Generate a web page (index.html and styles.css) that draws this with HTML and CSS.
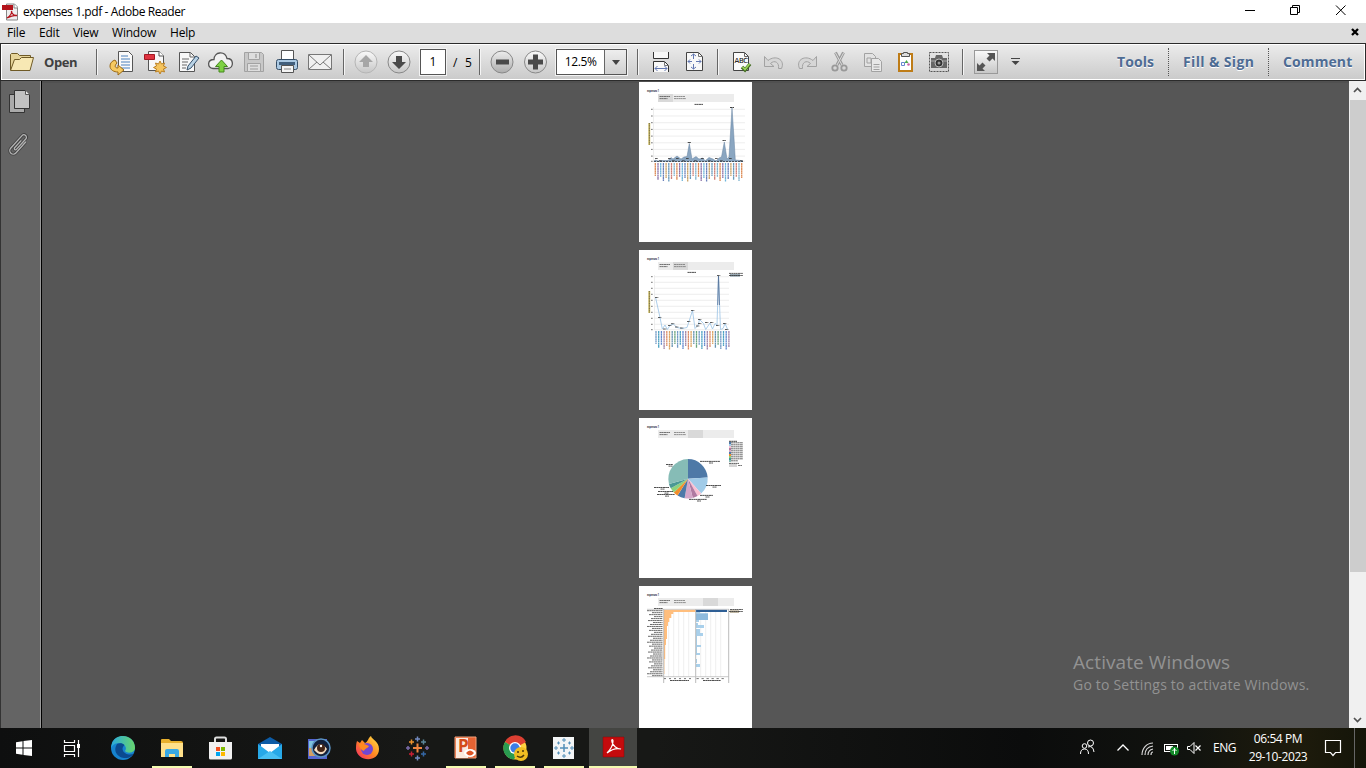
FILE: index.html
```html
<!DOCTYPE html>
<html lang="en">
<head>
<meta charset="utf-8">
<title>expenses 1.pdf - Adobe Reader</title>
<link rel="stylesheet" href="styles.css">
</head>
<body>
<header class="titlebar">
  <svg class="app-icon" width="18" height="18" viewBox="0 0 18 18"><path d="M4.500 1h8l3 3v13h-11z" fill="#eee" stroke="#888"/><path d="M12 1v4h4" fill="#fff" stroke="#888"/><path d="M0 2h11v5H0z" fill="#b3131b"/><path d="M5 15c3-2 5-5 4.500-7 0 3 3 5 5.500 4.500-3-.5-6 .5-10 2.500z" fill="none" stroke="#b3131b" stroke-width="1.300"/></svg>
  <span class="window-title">expenses 1.pdf - Adobe Reader</span>
  <svg class="window-buttons" width="138" height="23" viewBox="0 0 138 23" fill="none" stroke="#000"><path d="M17 10.500h10M62.500 7.500h7v7h-7zM64.500 7.500v-2h7v7h-2M108 5.500l9.500 9.500M117.500 5.500l-9.500 9.500"/></svg>
</header>
<nav class="menubar">
  <span class="m-file">File</span><span class="m-edit">Edit</span><span class="m-view">View</span><span class="m-window">Window</span><span class="m-help">Help</span>
  <svg class="doc-close" width="8" height="8" viewBox="0 0 8 8"><path d="M1 1l6 6M7 1l-6 6" stroke="#000" stroke-width="2.300"/></svg>
</nav>
<div class="toolbar">
  <svg class="folder" width="26" height="36" viewBox="0 0 26 36"><path d="M1.500 26V10.500l1-1h6l2 2h11v4" fill="#e6d49a" stroke="#6f5a26"/><path d="M1.500 26.500l4-11h5l2-2h12l-3.500 13z" fill="#f7e8b4" stroke="#6f5a26"/></svg>
  <span class="open-label">Open</span>
  <i class="sep s1"></i>
  <div class="tools g1">
    <svg viewBox="0 0 33 36"><path d="M13.500 7.500h10l4 4v16h-14z" fill="#fafafa" stroke="#555"/><path d="M16 12h7M16 15h9M16 18h9M16 21h9M16 24h9" stroke="#4a80bd"/><path d="M10 16c-3 1-5 3-5 6 0 4 4 6 8 6v3l6-5-6-5v3c-3 0-4-2-1-5z" fill="#f6c960" stroke="#9b6a16"/></svg>
    <svg viewBox="0 0 33 36"><path d="M10.500 7.500h11l4 4v15h-15z" fill="#f8f8f8" stroke="#555"/><path d="M21 7v5h5" fill="#fff" stroke="#555"/><path d="M6.500 10.500h10v5h-10z" fill="#df3340" stroke="#a31722"/><path d="M22 17l1.500 3 3-1-1 3 3 1.500-3 1.500 1 3-3-1-1.500 3-1.500-3-3 1 1-3-3-1.500 3-1.500-1-3 3 1z" fill="#f5c45e" stroke="#bb8023"/></svg>
    <svg viewBox="0 0 33 36"><path d="M8.500 8.500h11l4 4v15h-15z" fill="#f8f8f8" stroke="#555"/><path d="M19 9v4h4M11 15h7M11 18h6M11 21h5M11 24h4" fill="none" stroke="#666"/><path d="M25 12l3 2-8 10-4 2 1-4z" fill="#b9d3e6" stroke="#36506a"/></svg>
    <svg viewBox="0 0 33 36"><path d="M10 24.500H9c-6-1-6-9 1-9 0-8 11-9 13-1 7 0 7 9 1 10z" fill="#f2f2f2" stroke="#555" stroke-width="1.300"/><path d="M17.500 16l6 6.500h-3.500V28h-5v-5.500h-3.500z" fill="#7ed143" stroke="#44881e"/></svg>
    <svg viewBox="0 0 33 36"><path d="M7.500 8.500h17l2 2v17h-19z" fill="#c8c8c8" stroke="#a2a2a2"/><path d="M11.500 8.500h11v7h-11zM10.500 19.500h13v8h-13z" fill="#dedede" stroke="#a2a2a2"/><path d="M19 10v4M13 22h8M13 25h8" stroke="#999" stroke-width="1.200"/></svg>
    <svg viewBox="0 0 33 36"><path d="M11.500 6.500h12v10h-12z" fill="#fff" stroke="#555"/><rect x="6.500" y="15.500" width="21" height="10" rx="2" fill="#abc9e3" stroke="#344d66"/><path d="M9 18h16v3H9z" fill="#415f7d"/><path d="M11.500 21.500h12v7h-12z" fill="#f4f4f4" stroke="#555"/><path d="M14 25h7" stroke="#888"/></svg>
    <svg viewBox="0 0 33 36"><path d="M5.500 10.500h23v15h-23z" fill="#f0f0f0" stroke="#777"/><path d="M6 11l11 10 11-10M6 25l8-7M28 25l-8-7" fill="none" stroke="#777"/></svg>
  </div>
  <i class="sep s2"></i>
  <div class="tools g2">
    <svg viewBox="0 0 33 36"><circle cx="17" cy="18" r="11" fill="url(#round)" stroke="#b5b5b5"/><path d="M17 11l7 7h-4v5h-6v-5h-4z" fill="#a6a6a6"/></svg>
    <svg viewBox="0 0 33 36"><circle cx="17" cy="18" r="11" fill="url(#round)" stroke="#888"/><path d="M17 25l7-7h-4v-6h-6v6h-4z" fill="#4a4a4a"/></svg>
  </div>
  <span class="page-input">1</span><span class="slash">/</span><span class="page-count">5</span>
  <i class="sep s3"></i>
  <div class="tools g3">
    <svg viewBox="0 0 33 36"><circle cx="17" cy="18" r="11" fill="url(#roundDark)" stroke="#888"/><path d="M11 15.500h13v5H11z" fill="#4a4a4a"/></svg>
    <svg viewBox="0 0 33 36"><circle cx="17.500" cy="18" r="11" fill="url(#round)" stroke="#888"/><path d="M15 10.500h5v5h5v5h-5v5h-5v-5h-5v-5h5z" fill="#4a4a4a"/></svg>
  </div>
  <div class="zoom-box"><span class="zoom-value">12.5%</span><span class="zoom-arrow"><svg width="8" height="5" viewBox="0 0 8 5"><path d="M0 0h8L4 5z" fill="#444"/></svg></span></div>
  <i class="sep s4"></i>
  <div class="tools g4">
    <svg viewBox="0 0 33 36"><path d="M9.500 8v6.500h15V8" fill="#f8f8f8" stroke="#333"/><path d="M9.500 28V17.500h11l4 4V28" fill="#f8f8f8" stroke="#333"/><path d="M20.500 17.500v4h4" fill="none" stroke="#777"/><path d="M11 24.500h12M13.500 22l-2.500 2.500 2.500 2.500M20.500 22l2.500 2.500-2.500 2.500" fill="none" stroke="#6277b1"/></svg>
    <svg viewBox="0 0 33 36"><path d="M9.500 8.500h12l4 4v14h-16z" fill="#f8f8f8" stroke="#444"/><path d="M21.500 8.500v4h4" fill="none" stroke="#777"/><path d="M16.500 10v5M16.500 20v5M11 17.500h4M19 17.500h5M14 12l2.500-2 2.500 2M14 23l2.500 2 2.500-2M13 15.500l-2 2 2 2M22 15.500l2 2-2 2" fill="none" stroke="#6277b1"/></svg>
  </div>
  <i class="sep s5"></i>
  <div class="tools g5">
    <svg viewBox="0 0 33 36"><path d="M9.500 8.500h11l4 4v14h-15z" fill="#fafafa" stroke="#444"/><path d="M20.500 8.500v4h4" fill="none" stroke="#666"/><text x="10.500" y="19" class="abc">ABC</text><path d="M18 23l3 3 5-6" fill="none" stroke="#416b1f" stroke-width="3.500"/><path d="M18.500 23l2.500 2.500 4.500-5.500" fill="none" stroke="#9bd35c" stroke-width="1.700"/></svg>
    <svg viewBox="0 0 33 36"><path d="M7.500 12.500v10H17l-3.500-3c4-4 9-1 8 5h3c4-9-6-14-13.500-8z" fill="#d6d6d6" stroke="#a2a2a2"/></svg>
    <svg viewBox="0 0 33 36"><path d="M26.500 12.500v10H17l3.500-3c-4-4-9-1-8 5h-3c-4-9 6-14 13.500-8z" fill="#d6d6d6" stroke="#a2a2a2"/></svg>
    <svg viewBox="0 0 33 36"><path d="M12.500 8.500l6.500 12.500M20.500 8.500l-6.500 12.500" stroke="#999" stroke-width="3"/><path d="M12.500 9l6.500 12M20.500 9l-6.500 12" stroke="#dcdcdc"/><circle cx="12" cy="24" r="2.700" fill="none" stroke="#999" stroke-width="1.800"/><circle cx="21" cy="24" r="2.700" fill="none" stroke="#999" stroke-width="1.800"/></svg>
    <svg viewBox="0 0 33 36"><path d="M8.500 9.500h8l3 3v10h-11z" fill="#e2e2e2" stroke="#a2a2a2"/><path d="M15.500 14.500h7l3 3v10h-10z" fill="#e8e8e8" stroke="#a2a2a2"/><path d="M11 14h4v5h-4zM17.500 20.500h6M17.500 23h6M17.500 25.500h6" fill="none" stroke="#a2a2a2"/></svg>
    <svg viewBox="0 0 33 36"><rect x="10" y="10" width="13" height="17" fill="#fff" stroke="#be7c17" stroke-width="2"/><path d="M12.500 12.500v-3h2v-1h4v1h2v3z" fill="#ddd" stroke="#555"/><path d="M12.500 18.500h3v3h-3z" fill="none" stroke="#6685cf"/><path d="M17.500 16l2 3h-4z" fill="#4ca84c"/><circle cx="19.500" cy="20.500" r="1.300" fill="#ce65a8"/></svg>
    <svg viewBox="0 0 33 36"><rect x="7.500" y="8.500" width="19" height="19" fill="none" stroke="#555" stroke-dasharray="2 1"/><path d="M9 14h4l1-3h6l1 3h4v10H9z" fill="#666"/><path d="M9 17h16" stroke="#aaa"/><circle cx="17" cy="19" r="4" fill="#333" stroke="#bbb"/><circle cx="17" cy="19" r="1.500" fill="#999"/></svg>
  </div>
  <i class="sep s6"></i>
  <svg class="fullscreen" width="24" height="24" viewBox="0 0 24 24"><rect x=".5" y=".5" width="23" height="23" fill="url(#round)" stroke="#999"/><path d="M13 3h8v8l-2.500-2.500-3 3-3-3 3-3zM3 21v-8l2.500 2.500 3-3 3 3-3 3L11 21z" fill="#555"/></svg>
  <svg class="more" width="9" height="8" viewBox="0 0 9 8"><path d="M0 .5h9" stroke="#444"/><path d="M.5 3h8l-4 4z" fill="#444"/></svg>
  <div class="panes"><span class="pane-tools">Tools</span><i></i><span class="pane-sign">Fill &amp; Sign</span><i></i><span class="pane-comment">Comment</span></div>
</div>
<main class="workspace">
  <aside class="sidebar">
    <svg width="40" height="90" viewBox="0 0 40 90"><path d="M9.500 13.500h15v18h-15z" fill="#aaa" stroke="#333"/><path d="M14.500 9.500h11l4 4v14h-15z" fill="#c1c1c1" stroke="#333"/><path d="M25.500 9.500v4h4" fill="#e8e8e8" stroke="#555"/><g transform="translate(19 64) rotate(42)" fill="none"><path d="M3-7V8a3.500 3.500 0 0 1-7 0V-9a2.500 2.500 0 0 1 5 0V5a1.200 1.200 0 0 1-2.400 0V-5" stroke="#404040" stroke-width="3"/><path d="M3-7V8a3.500 3.500 0 0 1-7 0V-9a2.500 2.500 0 0 1 5 0V5a1.200 1.200 0 0 1-2.400 0V-5" stroke="#b4b4b4" stroke-width="1.300"/></g></svg>
  </aside>
  <section class="document">
    <svg class="page" id="area-page" viewBox="0 0 113 160"></svg>
    <svg class="page" id="line-page" viewBox="0 0 113 160"></svg>
    <svg class="page" id="pie-page" viewBox="0 0 113 160"></svg>
    <svg class="page" id="bar-page" viewBox="0 0 113 160"></svg>
  </section>
  <div class="scrollbar"><svg width="17" height="19" viewBox="0 0 17 19"><path d="M5 11l3.500-3.500L12 11" fill="none" stroke="#505050" stroke-width="1.700"/></svg><div class="thumb"></div><svg class="down" width="17" height="19" viewBox="0 0 17 19"><path d="M5 9l3.500 3.500L12 9" fill="none" stroke="#505050" stroke-width="1.700"/></svg></div>
  <div class="watermark"><div class="wm-title">Activate Windows</div><div class="wm-sub">Go to Settings to activate Windows.</div></div>
</main>
<footer class="taskbar">
  <div class="apps">
    <svg viewBox="0 0 49 40"><path d="M16 14.300l6.500-1v6.200H16zM23.500 13.100l8.500-1.100v7.500h-8.500zM16 20.500h6.500v6.200l-6.500-1zM23.500 20.500H32V28l-8.500-1.100z" fill="#fff"/></svg>
    <svg viewBox="0 0 49 40" fill="none" stroke="#fff"><path d="M15.500 12v2.500h10V12M15.500 17.500h10v6h-10zM15.500 29v-2.500h10V29M29.500 12v17" stroke-width="1.200"/><path d="M28 16h3v4h-3z" fill="#fff" stroke="none"/></svg>
    <svg viewBox="0 0 49 40"><circle cx="25" cy="20" r="12" fill="#1683cf"/><path d="M14 15C18 4 37 6 37 20c0 5-8 6-10 3 2-2 1-7-5-8-4 0-7 1-9 5z" fill="url(#edge)"/><path d="M19 16c-5 8 2 15 10 14 3-.5 5-2 6.500-4-3 1-10 1-11-5 0-2 1-3 2-4-2-2-5-2-7.500-1z" fill="#0b4a8f"/></svg>
    <svg viewBox="0 0 49 40" class="running"><path d="M14 12q0-1 1-1h7l2 2h10q2 0 2 2v14H14z" fill="#e8b02d"/><path d="M14 15h22v14H14z" fill="#ffe08a"/><path d="M18 29v-6q0-2 2-2h10q2 0 2 2v6h-4v-3h-6v3z" fill="#3aa9e4"/></svg>
    <svg viewBox="0 0 49 40"><path d="M19 16v-5q0-1.500 1.500-1.500h8Q30 9.500 30 11v5" fill="none" stroke="#ddd" stroke-width="2"/><path d="M13 14h23v16q0 1.500-1.500 1.500h-20Q13 31.500 13 30z" fill="#f1f1f1"/><path d="M20 19h4v4h-4z" fill="#f25022"/><path d="M25 19h4v4h-4z" fill="#7fba00"/><path d="M20 24h4v4h-4z" fill="#00a4ef"/><path d="M25 24h4v4h-4z" fill="#ffb900"/></svg>
    <svg viewBox="0 0 49 40"><path d="M13 16l12-7 12 7v3H13z" fill="#0d5ca6"/><path d="M16 16h18v9H16z" fill="#fff"/><path d="M13 16l12 9 12-9v15H13z" fill="#27a9e8"/><path d="M13 31l12-8 12 8z" fill="#48c0f3"/></svg>
    <svg viewBox="0 0 49 40"><path d="M14 11h19v20H14z" fill="#5465cf"/><path d="M15 13h8v7h-8z" fill="#7ec3dd"/><path d="M15 20h7l3 8h-10z" fill="#d39f65"/><circle cx="27" cy="20" r="9" fill="#12213b" stroke="#5b93c3" stroke-width="1.500"/><path d="M20 22q6-11 13-1-5 10-13 1z" fill="#f4ddc1"/><circle cx="27" cy="20" r="4" fill="#442617"/><circle cx="27" cy="18" r="1.200" fill="#fff"/></svg>
    <svg viewBox="0 0 49 40"><path d="M14 13l3 2 2-3 3 3c3-1 3-5 6-7 1 4 8 5 8 13 0 14-22 13-23 0 0-3 0-5 1-8z" fill="url(#fire)"/><circle cx="24" cy="21" r="6" fill="#7247d2"/><path d="M16 16c5-1 7 1 10 2-2 3-4 2-5 5-3-1-5-4-5-7z" fill="#ff8a1f"/></svg>
    <svg viewBox="0 0 49 40"><g stroke-width="1.500"><path d="M21 20h9M25.500 15.500v9" stroke="#f08540" stroke-width="2"/><path d="M23 11h5M25.500 8.500v5M23 30h5M25.500 27.500v5" stroke="#738ac0"/><path d="M14 20h4M16 18v4M33 20h4M35 18v4" stroke="#7b6ba8"/><path d="M17 14h5M19.500 11.500v5" stroke="#eb912c"/><path d="M29 14h5M31.500 11.500v5" stroke="#5b879b"/><path d="M17 26h5M19.500 23.500v5" stroke="#c72035"/><path d="M29 26h5M31.500 23.500v5" stroke="#3567a5"/></g></svg>
    <svg viewBox="0 0 49 40" class="running"><path d="M14 9h21v21H14z" fill="#e66333" stroke="#f3a07b"/><path d="M15 10h12v20H15z" fill="#fbe9dd"/><text x="17" y="24" class="ppt">P</text><ellipse cx="29" cy="25" rx="6" ry="4" fill="#fff"/><path d="M25 25q4-5 8 0-4 5-8 0" fill="#dc5426"/></svg>
    <svg viewBox="0 0 49 40" class="running"><circle cx="25" cy="20" r="11.500" fill="#ffd23f"/><path d="M25 20L15 14a11.500 11.500 0 0 1 21 0z" fill="#dc3f32"/><path d="M25 20L15 14a11.500 11.500 0 0 0 9 17.500l4-8z" fill="#299b50"/><circle cx="25" cy="20" r="6" fill="#fff"/><circle cx="25" cy="20" r="4.700" fill="#3c7de6"/><circle cx="31" cy="26" r="7" fill="#efbd22"/><path d="M27 24h2M32 23h2M27 28q4 3 7-1" fill="none" stroke="#48360a" stroke-width="1.500"/></svg>
    <svg viewBox="0 0 49 40" class="running"><path d="M14 9h21v22H14z" fill="#f3f5f6"/><g stroke="#538fb8"><path d="M21 20h8M25 16v8" stroke-width="1.500"/><path d="M23 12h4M25 10v4M23 28h4M25 26v4M15 20h4M17 18v4M31 20h4M33 18v4M18 15h3M19.500 13.500v3M29 15h3M30.500 13.500v3M18 25h3M19.500 23.500v3M29 25h3M30.500 23.500v3"/></g></svg>
    <svg viewBox="0 0 49 40" class="active running"><path d="M15 9h21v20H15z" fill="#c40b0d" stroke="#870a0a" stroke-width=".5"/><path d="M19 25c3-3 6-8 6-12 0-2-2-2-1 1 1 4 5 7 9 7-4-1-9 0-14 4z" fill="none" stroke="#fff" stroke-width="1.200"/></svg>
  </div>
  <div class="tray">
    <svg width="120" height="40" viewBox="0 0 120 40" fill="none" stroke="#fff"><circle cx="6.500" cy="18" r="2.300"/><path d="M2.500 26q0-5 4-5t4 5"/><circle cx="12.500" cy="15" r="3"/><path d="M10 19q5-2 6 5"/><path d="M39.500 22.500l5.500-5.500 5.500 5.500" stroke-width="1.300"/><path d="M64 27C64 20 69 15 75 15M67 27q0-8 8-9M70 27q0-5 5-6M73 27q0-3 2-3" stroke="#d8d8d8" stroke-width="1.200"/><rect x="86.500" y="16.500" width="13" height="7"/><path d="M88 18h7v4h-7z" fill="#fff" stroke="none"/><circle cx="96.500" cy="23" r="4.500" fill="#138b29" stroke="none"/><path d="M96.500 20v6M94.500 23l2-2 2 2"/><path d="M109.500 18.500h2.500l4-4v11l-4-4h-2.500z"/></svg>
    <svg class="mute" width="8" height="40" viewBox="0 0 8 40"><path d="M.5 17.500l5 5M5.500 17.500l-5 5" stroke="#fff" stroke-width="1.200"/></svg>
    <span class="lang">ENG</span>
    <div class="clock"><span class="time">06:54 PM</span><span class="date">29-10-2023</span></div>
    <svg class="notice" width="40" height="40" viewBox="0 0 40 40"><path d="M4.500 12.500h15v12h-5l-2.500 3-2.500-3h-5z" fill="none" stroke="#fff" stroke-width="1.200"/><path d="M33.500 0v40" stroke="#666"/></svg>
  </div>
</footer>
<svg width="0" height="0" class="defs"><defs><linearGradient id="round" x2="0" y2="1"><stop stop-color="#fafafa"/><stop offset="1" stop-color="#c6c6c6"/></linearGradient><linearGradient id="roundDark" x2="0" y2="1"><stop stop-color="#ededed"/><stop offset="1" stop-color="#adadad"/></linearGradient><linearGradient id="edge"><stop stop-color="#29a9df"/><stop offset="1" stop-color="#68d56b"/></linearGradient><linearGradient id="fire" x1="1" y1="0" x2="0" y2="1"><stop stop-color="#ffe54a"/><stop offset=".5" stop-color="#ff8a22"/><stop offset="1" stop-color="#f4246a"/></linearGradient></defs></svg>
<script src="charts.js"></script>
</body>
</html>
```

FILE: styles.css
```css
* { box-sizing: border-box; }
body { margin: 0; width: 1366px; height: 768px; overflow: hidden; display: flex; flex-direction: column; font-family: "Open Sans", "Noto Sans", sans-serif; font-size: 12px; color: #000; background: #fff; }
svg { display: block; flex: none; }
span { white-space: nowrap; }
.defs { position: absolute; }
.titlebar { height: 23px; flex: none; display: flex; align-items: center; padding-left: 2px; background: #fff; }
.window-title { margin-left: 3px; letter-spacing: -.4px; }
.window-buttons { width: 138px; margin-left: auto; }
.menubar { height: 20px; flex: none; display: flex; align-items: center; padding: 0 7px 2px; background: #ddd; letter-spacing: -.2px; }
.m-file { width: 32px; }
.m-edit { width: 34px; }
.m-view { width: 39px; }
.m-window { width: 58px; }
.doc-close { margin-left: auto; }
.toolbar { height: 38px; flex: none; display: flex; align-items: center; border: 1px solid #2b2b2b; background: linear-gradient(#ececec, #cacaca); box-shadow: inset 0 0 0 1px #fff; padding-left: 8px; }
.folder { width: 26px; }
.open-label { width: 36px; margin-left: 9px; font-size: 13px; font-weight: 700; letter-spacing: -.4px; color: #404040; }
.sep { width: 1px; height: 26px; flex: none; background: #666; box-shadow: 1px 0 #f5f5f5; }
.s1 { margin-left: 16px; }
.tools { display: flex; flex: none; height: 36px; }
.tools svg { width: 33px; height: 36px; }
.g1 { margin-left: 8px; }
.s2 { margin-left: 7px; }
.g2 { margin-left: 5px; }
.page-input { width: 26px; height: 26px; margin-left: 5px; border: 1px solid #555; outline: 1px solid #f3f3f3; background: #fff; text-align: center; line-height: 23px; }
.slash { margin-left: 7px; width: 12px; }
.page-count { width: 7px; }
.s3 { margin-left: 7px; }
.g3 { margin-left: 5px; }
.zoom-box { display: flex; width: 71px; height: 26px; margin-left: 5px; border: 1px solid #555; background: #fff; outline: 1px solid #f3f3f3; flex: none; }
.zoom-value { width: 48px; text-align: center; line-height: 23px; letter-spacing: -.4px; }
.zoom-arrow { width: 22px; border-left: 1px solid #666; display: flex; align-items: center; justify-content: center; background: linear-gradient(#eee, #d0d0d0); }
.s4 { margin-left: 10px; }
.g4 { margin-left: 6px; }
.s5 { margin-left: 7px; }
.g5 { margin-left: 6px; }
.s6 { margin-left: 7px; }
.fullscreen { margin-left: 11px; }
.more { margin-left: 13px; }
.abc { font: 7px "DejaVu Sans", sans-serif; letter-spacing: -.3px; }
.panes { display: flex; align-items: center; height: 34px; padding-bottom: 1px; margin-left: auto; color: #4e6c94; font-weight: 700; font-size: 14px; letter-spacing: .1px; text-shadow: 0 1px #fff; }
.panes i { width: 1px; height: 28px; border-left: 1px dotted #555; margin-right: 14px; }
.pane-tools { width: 51px; }
.pane-sign { width: 85px; letter-spacing: .35px; }
.pane-comment { width: 82px; }
.workspace { height: 647px; flex: none; display: flex; position: relative; overflow: hidden; background: #565656; }
.sidebar { width: 42px; background: #646464; border-right: 1px solid #000; box-shadow: inset -1px 0 #999, inset 1px 0 #333; flex: none; }
.document { width: 1307px; display: flex; flex-direction: column; align-items: center; gap: 8px; padding-top: 1px; box-shadow: inset 0 2px #505050; }
.page { width: 113px; height: 160px; background: #fff; }
.page-title { font: bold 3px "Open Sans", sans-serif; fill: #1d2638; }
.scrollbar { width: 17px; display: flex; flex-direction: column; background: #f0f0f0; }
.thumb { height: 472px; margin-left: 1px; background: #cdcdcd; }
.down { margin-top: auto; }
.watermark { position: absolute; left: 1073px; top: 569px; color: #929292; }
.wm-title { font-size: 19px; line-height: 25px; letter-spacing: .08px; }
.wm-sub { font-size: 14px; line-height: 20px; letter-spacing: .2px; }
.taskbar { height: 40px; flex: none; display: flex; justify-content: space-between; background: linear-gradient(90deg, #0e0f0f, #171816 30%, #171816 48%, #0b0c0c 75%, #11130f 87%, #1e1b0c 95%, #141509); color: #fff; }
.apps, .tray { display: flex; align-items: center; }
.apps svg { width: 49px; height: 40px; }
.apps .running { background: linear-gradient(#f3fbb0, #f3fbb0) 5px 38px / 40px 2px no-repeat; }
.apps .active { background: linear-gradient(#f3fbb0, #f3fbb0) 1px 38px / 48px 2px no-repeat, linear-gradient(#444542, #444542) 1px 0 / 48px 40px no-repeat; }
.ppt { font: bold 17px "Open Sans", sans-serif; fill: #d44a19; }
.tray { width: 288px; }
.mute { margin-left: -3px; }
.lang { margin-left: 10px; width: 31px; padding-bottom: 1px; letter-spacing: -.5px; }
.clock { width: 68px; display: flex; flex-direction: column; align-items: center; line-height: 18px; letter-spacing: -.4px; margin-right: 9px; }
```

FILE: charts.js
```js
const round = n => Math.round(n * 100) / 100;
const rect = (x, y, w, h, fill) => `<rect x="${round(x)}" y="${round(y)}" width="${round(w)}" height="${round(h)}" fill="${fill}"/>`;
const line = (x1, y1, x2, y2, color, width = 1, dash = 'none') => `<path d="M${round(x1)} ${round(y1)}L${round(x2)} ${round(y2)}" fill="none" stroke="${color}" stroke-width="${width}" stroke-dasharray="${dash}"/>`;
const label = (x, y, w, color = '#555') => line(x, y, x + w, y, color, 0.8, '2.3 .2 1.6 .3');

function header(active) {
  let out = '<text class="page-title" x="8" y="10.300" textLength="12" lengthAdjust="spacingAndGlyphs">expenses 1</text>';
  out += rect(19, 12, 76, 8, '#ececec') + rect(19 + 15 * active, 12, 15, 8, '#d9d9d9');
  out += label(20.5, 14.5, 10.5) + label(20.5, 16.6, 8) + label(35, 14.5, 11, '#777') + label(35, 16.6, 12, '#777');
  return out;
}

function axis(left, right, rows, titleX) {
  let out = label(titleX, 22.4, 8.5, '#222');
  rows.forEach(y => { out += line(left, y, right, y, '#e6e6e6', 0.7) + label(12, y, 1.7); });
  out += line(left, 25, left, 80, '#ddd', 0.5);
  out += line(10.3, 41, 10.3, 63, '#d6c15a', 1.8) + line(10.3, 41, 10.3, 63, '#444', 0.7, '1.2 .5');
  return out;
}

function columnLabels(start, end, colors) {
  let out = '';
  let i = 0;
  for (let x = start; x < end; x += 2.7) {
    out += line(x, 81, x, 94 + (i * 4 % 7), colors[i % colors.length], 1.3, '2.4 .3 1.6 .3');
    i++;
  }
  return out;
}

const areaRows = [27.3, 34, 40.7, 47.4, 54.1, 60.8, 67.4, 74.1, 79.3];
document.getElementById('area-page').innerHTML = header(0) + axis(14.5, 106, areaRows, 55.5) +
  '<path d="M15 79.300L16 78L19 79L23 78.500L29 78.500L32 75.500L34 77L38 74L42 77L45 75L48 74.500L50.300 61.500L53 77L57 74.500L60 77L64 76L66 79L70 75.500L74 77L77 79L80 76L82.500 75L85.300 60L88 77L90 75L93 26L95 56L96.300 78L102 78.500L104 79.300Z" fill="#8aa6c1" stroke="#6683a0" stroke-width=".500"/>' +
  [16, 20, 29, 33, 37, 43, 47, 55, 62, 69, 76, 81, 90, 101].map((x, i) => label(x, i % 2 ? 78.8 : 76.5, 3, '#333')).join('') +
  label(48.7, 60.5, 3.3, '#222') + label(83.5, 58.5, 3.3, '#222') + label(91, 25.5, 4, '#111') +
  line(15, 79.5, 104, 79.5, '#3b4650', 0.9, '2 1') +
  columnLabels(16.3, 105, ['#dd8a54', '#8c73a8', '#6fb5da', '#6a80ba', '#c9a368', '#6799bd', '#cf7f77', '#7fb4cf']);

const lineRows = [26.7, 32.3, 38.3, 44.3, 50.3, 56.3, 62.3, 68.3, 74.3, 79.7];
document.getElementById('line-page').innerHTML = header(1) + axis(15.5, 90, lineRows, 48.5) +
  '<path d="M16.700 48L21 67.500L23.300 79L26 75L28.300 79.500L31 75.500L34.300 74L38 77.500L43 78.500L48 77.500L50 71.500L53.500 60.500L56 78.500L59 75.500L60.500 69.500L64.500 73.500L66.700 79.500L71 73L73.500 79L76 73.500L78 75L79.500 26L81.500 79.500L84 78.500L86 73.500L88.700 79.500" fill="none" stroke="#98c2e4" stroke-width=".800"/>' +
  '<path d="M78.700 55L79.500 26L80.500 55" fill="none" stroke="#526f97" stroke-width=".800"/>' +
  [[16, 47.5], [19, 67.5], [24, 79], [29, 75.5], [32, 73.7], [36, 77], [41, 78], [48, 71.5], [52, 60.5], [57, 76], [59, 69.5], [59, 73.5], [66, 72.5], [71, 72.5], [77, 75.5], [78, 25.5], [84, 73.5], [86, 79.5]].map(p => label(p[0], p[1], 3.3, '#333')).join('') +
  columnLabels(17, 90, ['#739ac5', '#4ba1c2', '#6389cf', '#a084a8', '#dc8c68', '#dba563', '#6793b1', '#6ba47c']) +
  label(90, 23.4, 14, '#333') + rect(91, 24.2, 10, 2.4, '#8296a3') + label(90, 25.5, 14, '#333');

let pie = header(2);
const slices = [[0, 86, '#4e79a7'], [86, 138, '#a0cbe8'], [138, 151, '#fabfd2'], [151, 166, '#b07aa1'], [166, 190, '#d4a6c8'], [190, 212, '#4e79a7'], [212, 226, '#f28e2b'], [226, 241, '#8cd17d'], [241, 255, '#499894'], [255, 360, '#86bcb6']];
const cx = 49, cy = 60.8, radius = 19.7;
slices.forEach(([start, end, color]) => {
  const point = a => `${round(cx + radius * Math.sin(a * Math.PI / 180))} ${round(cy - radius * Math.cos(a * Math.PI / 180))}`;
  pie += `<path d="M${cx} ${cy}L${point(start)}A${radius} ${radius} 0 0 1 ${point(end)}Z" fill="${color}"/>`;
});
[[61, 43.4, 20], [27, 46.5, 7], [67, 67.5, 15], [61, 77.4, 13], [50, 81.4, 18], [15, 69.5, 15], [19, 73.5, 15], [18, 76.5, 18]].forEach(p => { pie += label(p[0], p[1], p[2], '#222') + label(p[0] + p[2] / 2 - 1, p[1] + 1.6, 4, '#333'); });
pie += label(90, 23.3, 8, '#111');
['#4e79a7', '#a0cbe8', '#fabfd2', '#b07aa1', '#d4a6c8', '#4e79a7', '#f28e2b', '#8cd17d', '#499894', '#86bcb6'].forEach((c, i) => { pie += rect(90, 24 + i * 2, 2, 2, c) + label(92, 24.8 + i * 2, i === 9 ? 7 : 12, '#444'); });
pie += label(90, 45.4, 10, '#333') + rect(90, 46, 8, 3, '#d5d5d5') + label(99, 47.5, 4);
document.getElementById('pie-page').innerHTML = pie;

let bars = header(3) + label(15, 22.5, 9, '#222');
for (let i = 1; i < 6; i++) bars += line(24.7 + i * 5, 24, 24.7 + i * 5, 91, '#e4e4e4', 0.6) + line(56.7 + i * 5, 24, 56.7 + i * 5, 91, '#e4e4e4', 0.6);
for (let i = 0; i < 34; i++) {
  const inset = i * 5 % 8;
  bars += label(8 + inset, 24.7 + i * 1.97, 15.5 - inset, '#444');
}
[[23.7, 2.3, 31.5], [26, 2, 9.3], [28, 4, 7.3], [32, 4, 5.3], [36, 4, 4], [40, 13, 3], [53, 6, 2], [59, 14, 1.2], [73, 15, .4]].forEach(([y, h, w]) => { bars += rect(25, y, w, h, '#ffbe7d'); });
[[23.7, 2.3, 31, '#2f5f95'], [26, 1.3, 4], [27.3, 6.7, 12, '#8ebadd'], [34, 2, 3], [37, 2, 2], [39, 3, 8], [43, 4, 4], [47, 3, 7], [50, 9, 1], [59, 2, 5], [61, 6, 1], [67, 2, 4], [73, 4, 1], [78, 3, 4]].forEach(([y, h, w, c = '#a9d0eb']) => { bars += rect(57, y, w, h, c); });
[24.7, 56.7, 89.7].forEach(x => { bars += line(x, 23, x, 97, '#aaa', 0.8); });
bars += line(8, 23.3, 90, 23.3, '#bbb', 0.7) + line(8, 90.7, 90, 90.7, '#bbb', 0.8);
for (let i = 0; i < 6; i++) bars += label(25 + i * 5, 92.6, 2, '#555') + label(57.5 + i * 5, 92.6, 2.5, '#555');
bars += label(31, 94.5, 19, '#222') + label(64, 94.5, 18, '#222') + label(91, 23.5, 13, '#333') + rect(91, 24.3, 9, 2.6, '#b9ae98') + label(90, 25.5, 14, '#333');
document.getElementById('bar-page').innerHTML = bars;
```
